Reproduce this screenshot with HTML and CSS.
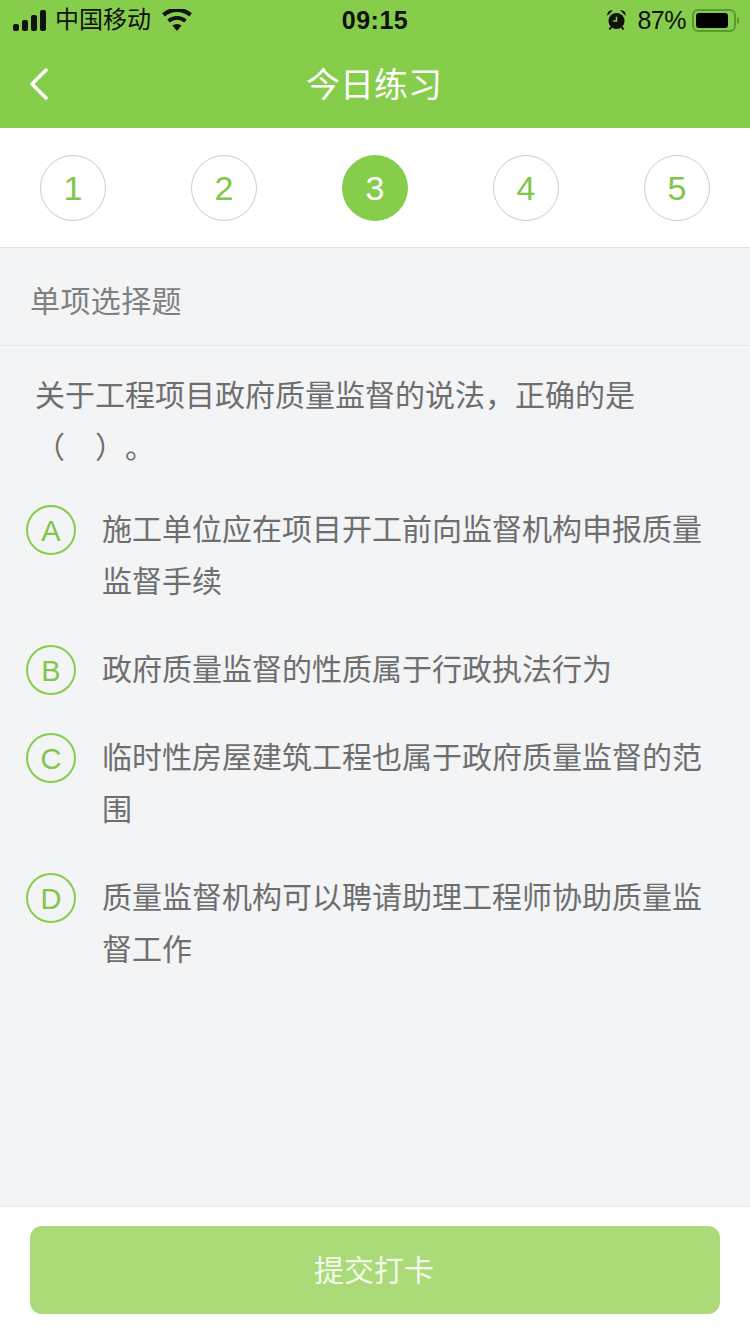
FILE: index.html
```html
<!DOCTYPE html>
<html lang="zh-CN">

<head>
    <meta charset="UTF-8" />
    <title>今日练习</title>
    <link rel="stylesheet" href="styles.css">
</head>

<body>
    <div class="page">
        <header class="header">
            <div class="status-bar">
                <div class="status-left">
                    <svg class="signal" viewBox="0 0 33 21">
                        <rect x="0" y="14" width="6" height="7" rx="2" />
                        <rect x="9" y="10" width="6" height="11" rx="2" />
                        <rect x="18" y="5" width="6" height="16" rx="2" />
                        <rect x="27" y="0" width="6" height="21" rx="2" />
                    </svg>
                    <span class="carrier">中国移动</span>
                    <svg class="wifi" viewBox="0 0 30 22">
                        <path d="M15 22l-4.600-5.400a7 7 0 0 1 9.200 0z" />
                        <path d="M7.800 13.500a11 11 0 0 1 14.400 0l2.500-3a15 15 0 0 0-19.400 0z" />
                        <path d="M2.800 7.500a18.500 18.500 0 0 1 24.400 0l2.700-3.200a23 23 0 0 0-29.800 0z" />
                    </svg>
                </div>
                <div class="status-time">09:15</div>
                <div class="status-right">
                    <svg class="alarm" viewBox="0 0 20 21">
                        <circle cx="10" cy="11.500" r="8.500" />
                        <path d="M0.500 6a4.500 4.500 0 0 1 5.500-5.500zM19.500 6a4.500 4.500 0 0 0-5.500-5.500z" />
                        <path d="M4.500 18l-2 2.500M15.500 18l2 2.500" class="alarm-legs" />
                        <path d="M10 7v4.500h-3.500" class="alarm-hands" />
                    </svg>
                    <span class="battery-text">87%</span>
                    <div class="battery">
                        <div class="battery-fill"></div>
                    </div>
                    <div class="battery-nub"></div>
                </div>
            </div>
            <div class="nav-bar">
                <svg class="back" viewBox="0 0 20 32">
                    <path d="M17 2L3 16l14 14" />
                </svg>
                <div class="nav-title">今日练习</div>
            </div>
        </header>

        <div class="steps">
            <div class="step">1</div>
            <div class="step">2</div>
            <div class="step active">3</div>
            <div class="step">4</div>
            <div class="step">5</div>
        </div>

        <main class="content">
            <div class="section-title">单项选择题</div>
            <div class="question">关于工程项目政府质量监督的说法，正确的是（　）。</div>
            <div class="options">
                <div class="option">
                    <div class="option-mark">A</div>
                    <div class="option-text">施工单位应在项目开工前向监督机构申报质量监督手续</div>
                </div>
                <div class="option">
                    <div class="option-mark">B</div>
                    <div class="option-text">政府质量监督的性质属于行政执法行为</div>
                </div>
                <div class="option">
                    <div class="option-mark">C</div>
                    <div class="option-text">临时性房屋建筑工程也属于政府质量监督的范围</div>
                </div>
                <div class="option">
                    <div class="option-mark">D</div>
                    <div class="option-text">质量监督机构可以聘请助理工程师协助质量监督工作</div>
                </div>
            </div>
        </main>

        <footer class="footer">
            <button class="submit-btn">提交打卡</button>
        </footer>
    </div>
</body>

</html>
```

FILE: styles.css
```css
body {
    margin: 0;
    padding: 0;
    font-family: "Liberation Sans", "Noto Sans CJK SC", sans-serif;
    background-color: #f3f4f6;
}

.page {
    width: 750px;
    height: 1334px;
    display: flex;
    flex-direction: column;
    overflow: hidden;
}

.header {
    height: 128px;
    background-color: #86cd4b;
    flex-shrink: 0;
}

.status-bar {
    height: 40px;
    display: grid;
    grid-template-columns: 1fr auto 1fr;
    align-items: center;
    color: #111;
}

.status-left {
    display: flex;
    align-items: center;
    padding-left: 13px;
}

.signal {
    width: 33px;
    height: 21px;
    fill: #111;
}

.carrier {
    font-size: 24px;
    margin-left: 9px;
    line-height: 40px;
}

.wifi {
    width: 30px;
    height: 22px;
    fill: #111;
    margin-left: 11px;
}

.status-time {
    font-size: 25px;
    font-weight: bold;
    letter-spacing: 0.5px;
}

.status-right {
    display: flex;
    align-items: center;
    justify-content: flex-end;
    padding-right: 11px;
}

.alarm {
    width: 19px;
    height: 20px;
    fill: #111;
}

.alarm-legs {
    fill: none;
    stroke: #111;
    stroke-width: 2;
}

.alarm-hands {
    fill: none;
    stroke: #86cd4b;
    stroke-width: 1.600;
}

.battery-text {
    font-size: 25px;
    margin-left: 11px;
    letter-spacing: -0.5px;
}

.battery {
    width: 44px;
    height: 23px;
    margin-left: 6px;
    padding: 2px;
    box-sizing: border-box;
    border: 2px solid #5a9a35;
    border-radius: 6px;
}

.battery-fill {
    width: 32px;
    height: 100%;
    background-color: #000;
    border-radius: 3px;
}

.battery-nub {
    width: 2px;
    height: 7px;
    margin-left: 1px;
    background-color: #5a9a35;
    border-radius: 0 2px 2px 0;
}

.nav-bar {
    position: relative;
    height: 88px;
    display: flex;
    align-items: center;
    justify-content: center;
}

.back {
    position: absolute;
    left: 29px;
    top: 28px;
    width: 20px;
    height: 32px;
    fill: none;
    stroke: #fff;
    stroke-width: 3.500;
    stroke-linecap: round;
    stroke-linejoin: round;
}

.nav-title {
    font-size: 34px;
    color: #fff;
    margin: -4px 2px 0 0;
}

.steps {
    height: 120px;
    padding: 27px 40px 0;
    box-sizing: border-box;
    display: flex;
    justify-content: space-between;
    align-items: flex-start;
    background-color: #fff;
    border-bottom: 1px solid #e2e3e5;
    flex-shrink: 0;
}

.step {
    width: 66px;
    height: 66px;
    box-sizing: border-box;
    border: 1px solid #ccc;
    border-radius: 50%;
    display: flex;
    align-items: center;
    justify-content: center;
    font-size: 34px;
    color: #7fc64a;
}

.step.active {
    background-color: #86cd4b;
    border-color: #86cd4b;
    color: #fff;
}

.content {
    flex: 1;
}

.section-title {
    height: 98px;
    line-height: 108px;
    padding-left: 30px;
    font-size: 30px;
    letter-spacing: 0.4px;
    color: #808080;
    box-sizing: border-box;
    border-bottom: 1px solid #e6e7e9;
}

.question {
    padding: 24px 80px 0 35px;
    font-size: 30px;
    line-height: 52px;
    color: #6e6e6e;
    /* keep the full width cells of the brackets and the full stop */
    text-spacing-trim: space-all;
}

.options {
    margin-top: 30px;
    padding: 0 40px 0 26px;
    display: flex;
    flex-direction: column;
    gap: 36px;
}

.option {
    display: flex;
    align-items: flex-start;
}

.option-mark {
    width: 50px;
    height: 50px;
    margin-top: 1px;
    padding-top: 2px;
    box-sizing: border-box;
    border: 2px solid #86cd4b;
    border-radius: 50%;
    display: flex;
    align-items: center;
    justify-content: center;
    font-size: 29px;
    color: #7fc64a;
    flex-shrink: 0;
}

.option-text {
    margin-left: 26px;
    font-size: 30px;
    line-height: 52px;
    color: #6e6e6e;
}

.footer {
    height: 128px;
    padding: 19px 30px 0;
    box-sizing: border-box;
    background-color: #fff;
    border-top: 1px solid #e6e7e9;
    flex-shrink: 0;
}

.submit-btn {
    display: block;
    width: 100%;
    height: 88px;
    padding: 0 2px 4px 0;
    border: none;
    border-radius: 12px;
    background-color: #aadb78;
    color: #f4faec;
    font-family: inherit;
    font-size: 30px;
}
```
